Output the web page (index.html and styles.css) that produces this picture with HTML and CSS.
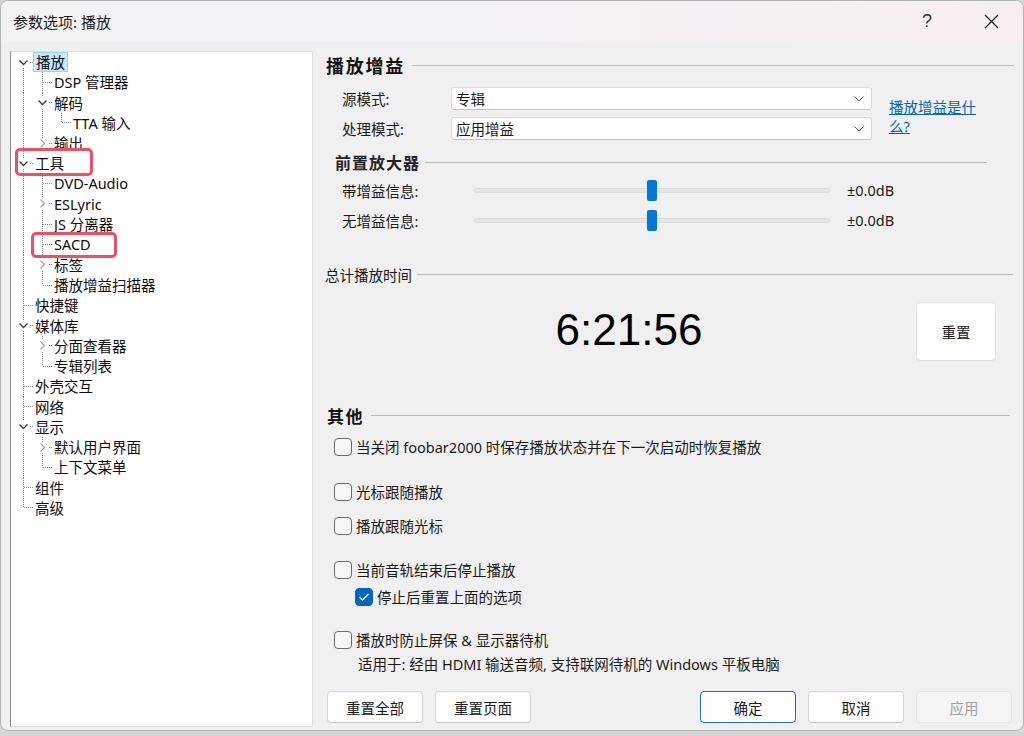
FILE: index.html
```html
<!DOCTYPE html>
<html lang="zh-CN">
<head>
<meta charset="utf-8">
<title>参数选项: 播放</title>
<link rel="stylesheet" href="styles.css">
</head>
<body>
<div class="window">
  <header class="titlebar">
    <span class="title">参数选项: 播放</span>
    <div class="tb-btns">
      <span class="tbb q">?</span>
      <span class="tbb"><svg width="15" height="15" viewBox="0 0 15 15"><path d="M1 1L14 14M14 1L1 14" stroke="#1a1a1a" stroke-width="1.2" fill="none"/></svg></span>
    </div>
  </header>
  <main class="body">
    <nav class="tree">
      <div class="row"><span class="c first"><svg class="chev" viewBox="0 0 11 11"><path d="M1.5 3.5L5.5 7.5L9.5 3.5" class="exp"/></svg></span><span class="t sel">播放</span></div>
      <div class="row"><span class="g v"></span><span class="c"></span><span class="t">DSP 管理器</span></div>
      <div class="row"><span class="g v"></span><span class="c"><svg class="chev" viewBox="0 0 11 11"><path d="M1.5 3.5L5.5 7.5L9.5 3.5" class="exp"/></svg></span><span class="t">解码</span></div>
      <div class="row"><span class="g v"></span><span class="g v"></span><span class="c last"></span><span class="t">TTA 输入</span></div>
      <div class="row"><span class="g v"></span><span class="c last"><svg class="chev" viewBox="0 0 11 11"><path d="M3.5 1.5L7.5 5.5L3.5 9.5" class="col"/></svg></span><span class="t">输出</span></div>
      <div class="row"><span class="c"><svg class="chev" viewBox="0 0 11 11"><path d="M1.5 3.5L5.5 7.5L9.5 3.5" class="exp"/></svg></span><span class="t">工具</span></div>
      <div class="row"><span class="g v"></span><span class="c"></span><span class="t">DVD-Audio</span></div>
      <div class="row"><span class="g v"></span><span class="c"><svg class="chev" viewBox="0 0 11 11"><path d="M3.5 1.5L7.5 5.5L3.5 9.5" class="col"/></svg></span><span class="t">ESLyric</span></div>
      <div class="row"><span class="g v"></span><span class="c"></span><span class="t">JS 分离器</span></div>
      <div class="row"><span class="g v"></span><span class="c"></span><span class="t">SACD</span></div>
      <div class="row"><span class="g v"></span><span class="c"><svg class="chev" viewBox="0 0 11 11"><path d="M3.5 1.5L7.5 5.5L3.5 9.5" class="col"/></svg></span><span class="t">标签</span></div>
      <div class="row"><span class="g v"></span><span class="c last"></span><span class="t">播放增益扫描器</span></div>
      <div class="row"><span class="c"></span><span class="t">快捷键</span></div>
      <div class="row"><span class="c"><svg class="chev" viewBox="0 0 11 11"><path d="M1.5 3.5L5.5 7.5L9.5 3.5" class="exp"/></svg></span><span class="t">媒体库</span></div>
      <div class="row"><span class="g v"></span><span class="c"><svg class="chev" viewBox="0 0 11 11"><path d="M3.5 1.5L7.5 5.5L3.5 9.5" class="col"/></svg></span><span class="t">分面查看器</span></div>
      <div class="row"><span class="g v"></span><span class="c last"></span><span class="t">专辑列表</span></div>
      <div class="row"><span class="c"></span><span class="t">外壳交互</span></div>
      <div class="row"><span class="c"></span><span class="t">网络</span></div>
      <div class="row"><span class="c"><svg class="chev" viewBox="0 0 11 11"><path d="M1.5 3.5L5.5 7.5L9.5 3.5" class="exp"/></svg></span><span class="t">显示</span></div>
      <div class="row"><span class="g v"></span><span class="c"><svg class="chev" viewBox="0 0 11 11"><path d="M3.5 1.5L7.5 5.5L3.5 9.5" class="col"/></svg></span><span class="t">默认用户界面</span></div>
      <div class="row"><span class="g v"></span><span class="c last"></span><span class="t">上下文菜单</span></div>
      <div class="row"><span class="c"></span><span class="t">组件</span></div>
      <div class="row"><span class="c last"></span><span class="t">高级</span></div>
      <div class="mark mark-tools"></div>
      <div class="mark mark-sacd"></div>
    </nav>

    <section class="panel">
      <div class="head h1"><span>播放增益</span><i class="rule"></i></div>
      <div class="gain">
        <div class="form">
          <div class="frow"><span class="lbl">源模式:</span><div class="combo"><span>专辑</span><svg width="10" height="6" viewBox="0 0 10 6"><path d="M0.5 0.5L5 5L9.5 0.5" stroke="#606060" stroke-width="1" fill="none"/></svg></div></div>
          <div class="frow"><span class="lbl">处理模式:</span><div class="combo"><span>应用增益</span><svg width="10" height="6" viewBox="0 0 10 6"><path d="M0.5 0.5L5 5L9.5 0.5" stroke="#606060" stroke-width="1" fill="none"/></svg></div></div>
        </div>
        <a class="help">播放增益是什么?</a>
      </div>

      <div class="head h2"><span>前置放大器</span><i class="rule"></i></div>
      <div class="srow"><span class="slbl">带增益信息:</span><div class="track"><span class="thumb"></span></div><span class="val">±0.0dB</span></div>
      <div class="srow"><span class="slbl">无增益信息:</span><div class="track"><span class="thumb"></span></div><span class="val">±0.0dB</span></div>

      <div class="head h3"><span>总计播放时间</span><i class="rule"></i></div>
      <div class="timerow">
        <div class="clock">6:21:56</div>
        <button class="btn reset">重置</button>
      </div>

      <div class="head h4"><span>其他</span><i class="rule"></i></div>
      <div class="cb cb1"><span class="box"></span><span class="lab">当关闭 foobar2000 时保存播放状态并在下一次启动时恢复播放</span></div>
      <div class="cb cb2"><span class="box"></span><span class="lab">光标跟随播放</span></div>
      <div class="cb cb3"><span class="box"></span><span class="lab">播放跟随光标</span></div>
      <div class="cb cb4"><span class="box"></span><span class="lab">当前音轨结束后停止播放</span></div>
      <div class="cb cb5"><span class="box on"><svg width="12" height="10" viewBox="0 0 12 10"><path d="M1.5 5L4.5 8L10.5 2" stroke="#fff" stroke-width="1.3" fill="none"/></svg></span><span class="lab">停止后重置上面的选项</span></div>
      <div class="cb cb6"><span class="box"></span><span class="lab">播放时防止屏保 &amp; 显示器待机</span></div>
      <div class="note">适用于: 经由 HDMI 输送音频, 支持联网待机的 Windows 平板电脑</div>

      <div class="actions">
        <div class="grp">
          <button class="btn">重置全部</button>
          <button class="btn">重置页面</button>
        </div>
        <div class="grp">
          <button class="btn primary">确定</button>
          <button class="btn">取消</button>
          <button class="btn disabled">应用</button>
        </div>
      </div>
    </section>
  </main>
</div>
</body>
</html>
```
FILE: styles.css
```css
html, body {
  margin: 0;
  padding: 0;
}
body {
  background: #d6d6d6;
  font-family: "Noto Sans", "Noto Sans CJK SC", sans-serif;
  font-size: 14.5px;
  color: #1a1a1a;
}
.window {
  width: 1024px;
  height: 731px;
  box-sizing: border-box;
  border: 1px solid #b3b3b3;
  border-radius: 8px;
  background: #f0f0f0;
  overflow: hidden;
  display: flex;
  flex-direction: column;
}
.titlebar {
  height: 40px;
  flex: none;
  display: flex;
  align-items: center;
  justify-content: space-between;
  padding-left: 12px;
  background: linear-gradient(90deg, #f3f3f4 0%, #f4f2f4 55%, #f8eef1 100%);
}
.title {
  font-size: 15px;
  color: #1a1a1a;
}
.tb-btns {
  display: flex;
  gap: 18px;
  margin-right: 9px;
}
.tbb {
  width: 46px;
  height: 40px;
  display: flex;
  align-items: center;
  justify-content: center;
}
.tbb.q {
  font-family: "Liberation Sans", Arial, sans-serif;
  font-size: 18px;
  color: #333;
}

.body {
  flex: 1;
  display: flex;
  padding: 10px 0 0 9px;
  min-height: 0;
}

/* ---------- tree ---------- */
.tree {
  --lc: #8a8a8a;
  --vl: repeating-linear-gradient(to bottom, var(--lc) 0 1px, transparent 1px 2px);
  --hl: repeating-linear-gradient(to right, var(--lc) 0 1px, transparent 1px 2px);
  position: relative;
  width: 303px;
  height: 676px;
  flex: none;
  box-sizing: border-box;
  background: #fff;
  border: 1px solid #dedede;
  border-left-color: #8c8c8c;
  padding-left: 3px;
}
.row {
  display: flex;
  height: 20.27px;
  align-items: stretch;
}
.g, .c {
  width: 19px;
  flex: none;
}
.g.v {
  background-image: var(--vl);
  background-repeat: no-repeat;
  background-position: 9px 0;
  background-size: 1px 100%;
}
.c {
  display: flex;
  align-items: center;
  background-image: var(--vl), var(--hl);
  background-repeat: no-repeat, no-repeat;
  background-position: 9px 0, 10px 50%;
  background-size: 1px 100%, 9px 1px;
}
.c.last {
  background-size: 1px 50%, 9px 1px;
}
.c.first {
  background-position: 9px 100%, 10px 50%;
  background-size: 1px 50%, 9px 1px;
}
.chev {
  width: 11px;
  height: 11px;
  margin-left: 4px;
  background: #fff;
}
.chev path {
  fill: none;
  stroke-width: 1.3;
}
.chev .exp { stroke: #3a3a3a; }
.chev .col { stroke: #a8a8a8; }
.t {
  display: flex;
  align-items: center;
  padding: 0 2px 1px;
  white-space: nowrap;
  color: #0d0d0d;
}
.t.sel {
  background: #cce8ff;
  border: 1px solid #99d1ff;
  padding: 0 2px 1px;
}
.mark {
  position: absolute;
  border: 3px solid #ef4f65;
  border-radius: 5px;
  box-sizing: border-box;
}
.mark-tools {
  left: 4px;
  top: 96px;
  width: 78px;
  height: 28px;
}
.mark-sacd {
  left: 20px;
  top: 180px;
  width: 86px;
  height: 26px;
}

/* ---------- panel ---------- */
.panel {
  margin-left: 13px;
  width: 688px;
  display: flex;
  flex-direction: column;
}
.head {
  display: flex;
  align-items: center;
  white-space: nowrap;
}
.head .rule {
  flex: 1;
  height: 1px;
  background: #b9b9b9;
}
.h1 {
  height: 28px;
  font-family: "Noto Sans CJK SC", sans-serif;
  font-weight: 700;
  font-size: 18px;
  letter-spacing: 1.75px;
  gap: 7px;
  color: #111;
}
.gain {
  display: flex;
  margin-top: 8px;
}
.form {
  display: flex;
  flex-direction: column;
  gap: 7px;
}
.frow {
  display: flex;
  align-items: center;
  height: 23px;
  padding-left: 16px;
}
.lbl {
  width: 109px;
  flex: none;
}
.combo {
  width: 421px;
  height: 23px;
  box-sizing: border-box;
  border: 1px solid #dadada;
  border-bottom-color: #c4c4c4;
  border-radius: 3px;
  background: #fff;
  display: flex;
  align-items: center;
  justify-content: space-between;
  padding: 0 7px 0 4px;
}
.help {
  margin-left: 17px;
  margin-top: 11px;
  width: 95px;
  line-height: 19px;
  color: #0067c0;
  text-decoration: underline;
}
.h2 {
  margin-top: 12px;
  height: 20px;
  padding-left: 9px;
  margin-right: 27px;
  font-family: "Noto Sans CJK SC", sans-serif;
  font-weight: 700;
  font-size: 16px;
  letter-spacing: 1px;
  gap: 5px;
  color: #222;
}
.h2 + .srow { margin-top: 3px; }
.srow {
  display: flex;
  align-items: center;
  height: 30px;
  padding-left: 16px;
}
.slbl {
  width: 132px;
  flex: none;
}
.track {
  width: 356px;
  height: 5px;
  box-sizing: border-box;
  background: #e6e6e6;
  border: 1px solid #d9d9d9;
  border-radius: 2px;
  display: flex;
  align-items: center;
  justify-content: center;
}
.thumb {
  width: 10px;
  height: 21px;
  flex: none;
  background: #0078d4;
  border-radius: 2px;
}
.val {
  margin-left: 17px;
}
.h3 {
  margin-top: 29px;
  height: 20px;
  margin-left: -1px;
  margin-right: 1px;
  gap: 5px;
}
.timerow {
  margin-top: 18px;
  height: 59px;
  display: flex;
}
.clock {
  flex: 1;
  padding-left: 16px;
  text-align: center;
  font-family: "Liberation Sans", Arial, sans-serif;
  font-size: 44px;
  line-height: 55px;
  color: #000;
}
.btn {
  font-family: "Noto Sans CJK SC", sans-serif;
  font-size: 14.5px;
  color: #1a1a1a;
  background: #fdfdfd;
  border: 1px solid #d6d6d6;
  border-bottom-color: #c6c6c6;
  border-radius: 4px;
  width: 96px;
  height: 32px;
  padding: 0;
}
.btn.reset {
  width: 80px;
  height: 59px;
  margin-right: 18px;
  border-color: #e0e0e0;
}
.btn.primary {
  border-color: #1f6fc2;
}
.btn.disabled {
  background: #f5f5f5;
  border-color: #e5e5e5;
  color: #a0a0a0;
}
.h4 {
  margin-top: 42px;
  height: 24px;
  margin-left: 1px;
  margin-right: 4px;
  font-family: "Noto Sans CJK SC", sans-serif;
  font-weight: 700;
  font-size: 17px;
  letter-spacing: 1.5px;
  gap: 7px;
  color: #111;
}
.cb {
  display: flex;
  align-items: center;
  height: 24px;
  padding-left: 8px;
  gap: 4px;
  white-space: nowrap;
}
.cb .lab {
  padding-bottom: 1px;
}
.box {
  width: 18px;
  height: 18px;
  box-sizing: border-box;
  border: 1px solid #6b6b6b;
  border-radius: 4px;
  background: #f7f7f7;
  flex: none;
  display: flex;
  align-items: center;
  justify-content: center;
}
.box.on {
  background: #0067c0;
  border-color: #0067c0;
}
.cb1 { margin-top: 8px; }
.cb2 { margin-top: 21px; }
.cb3 { margin-top: 10px; }
.cb4 { margin-top: 20px; }
.cb5 { margin-top: 3px; padding-left: 29px; }
.cb6 { margin-top: 19px; }
.note {
  margin-top: 1px;
  height: 24px;
  line-height: 23px;
  padding-left: 32px;
  white-space: nowrap;
}
.actions {
  margin-top: 14px;
  display: flex;
  justify-content: space-between;
  padding-left: 1px;
  padding-right: 2px;
}
.grp {
  display: flex;
  gap: 12px;
}
```
